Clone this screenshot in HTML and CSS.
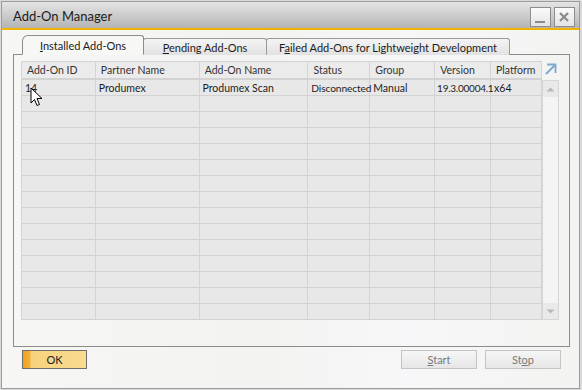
FILE: index.html
```html
<!DOCTYPE html>
<html>
<head>
<meta charset="utf-8">
<link rel="stylesheet" href="styles.css">
</head>
<body>
<div class="window">
  <div class="titlebar">
    <span class="title">Add-On Manager</span>
    <div class="tbtns">
      <span class="tbtn"><svg width="19" height="19" viewBox="0 0 19 19"><rect x="4" y="13" width="10" height="2" fill="#8a8a8a"/></svg></span>
      <span class="tbtn"><svg width="19" height="19" viewBox="0 0 19 19"><path d="M5 5 L13 13 M13 5 L5 13" stroke="#8a8a8a" stroke-width="2.2"/></svg></span>
    </div>
  </div>
  <div class="body">
    <div class="tabs">
      <div class="tab active"><span><u>I</u>nstalled Add-Ons</span></div>
      <div class="tab t2"><span><u>P</u>ending Add-Ons</span></div>
      <div class="tab t3"><span>F<u>a</u>iled Add-Ons for Lightweight Development</span></div>
    </div>
    <div class="panel">
      <div class="grid">
        <div class="gtable">
          <div class="row head">
            <div class="c c1">Add-On ID</div><div class="c c2">Partner Name</div><div class="c c3">Add-On Name</div><div class="c c4">Status</div><div class="c c5">Group</div><div class="c c6">Version</div><div class="c c7">Platform</div>
          </div>
          <div class="row">
            <div class="c c1">14</div><div class="c c2">Produmex</div><div class="c c3">Produmex Scan</div><div class="c c4 narrow">Disconnected</div><div class="c c5">Manual</div><div class="c c6 tight">19.3.00004.1</div><div class="c c7">x64</div>
          </div>
          <div class="row"><div class="c c1"></div><div class="c c2"></div><div class="c c3"></div><div class="c c4"></div><div class="c c5"></div><div class="c c6"></div><div class="c c7"></div></div>
          <div class="row"><div class="c c1"></div><div class="c c2"></div><div class="c c3"></div><div class="c c4"></div><div class="c c5"></div><div class="c c6"></div><div class="c c7"></div></div>
          <div class="row"><div class="c c1"></div><div class="c c2"></div><div class="c c3"></div><div class="c c4"></div><div class="c c5"></div><div class="c c6"></div><div class="c c7"></div></div>
          <div class="row"><div class="c c1"></div><div class="c c2"></div><div class="c c3"></div><div class="c c4"></div><div class="c c5"></div><div class="c c6"></div><div class="c c7"></div></div>
          <div class="row"><div class="c c1"></div><div class="c c2"></div><div class="c c3"></div><div class="c c4"></div><div class="c c5"></div><div class="c c6"></div><div class="c c7"></div></div>
          <div class="row"><div class="c c1"></div><div class="c c2"></div><div class="c c3"></div><div class="c c4"></div><div class="c c5"></div><div class="c c6"></div><div class="c c7"></div></div>
          <div class="row"><div class="c c1"></div><div class="c c2"></div><div class="c c3"></div><div class="c c4"></div><div class="c c5"></div><div class="c c6"></div><div class="c c7"></div></div>
          <div class="row"><div class="c c1"></div><div class="c c2"></div><div class="c c3"></div><div class="c c4"></div><div class="c c5"></div><div class="c c6"></div><div class="c c7"></div></div>
          <div class="row"><div class="c c1"></div><div class="c c2"></div><div class="c c3"></div><div class="c c4"></div><div class="c c5"></div><div class="c c6"></div><div class="c c7"></div></div>
          <div class="row"><div class="c c1"></div><div class="c c2"></div><div class="c c3"></div><div class="c c4"></div><div class="c c5"></div><div class="c c6"></div><div class="c c7"></div></div>
          <div class="row"><div class="c c1"></div><div class="c c2"></div><div class="c c3"></div><div class="c c4"></div><div class="c c5"></div><div class="c c6"></div><div class="c c7"></div></div>
          <div class="row"><div class="c c1"></div><div class="c c2"></div><div class="c c3"></div><div class="c c4"></div><div class="c c5"></div><div class="c c6"></div><div class="c c7"></div></div>
          <div class="row"><div class="c c1"></div><div class="c c2"></div><div class="c c3"></div><div class="c c4"></div><div class="c c5"></div><div class="c c6"></div><div class="c c7"></div></div>
          <div class="row"><div class="c c1"></div><div class="c c2"></div><div class="c c3"></div><div class="c c4"></div><div class="c c5"></div><div class="c c6"></div><div class="c c7"></div></div>
        </div>
        <div class="side">
          <div class="expand"><svg width="15" height="15" viewBox="0 0 15 15"><path d="M4 2.5 H12.5 V11" fill="none" stroke="#7ea8d2" stroke-width="1.8"/><path d="M12 3 L3 12" stroke="#7ea8d2" stroke-width="2"/></svg></div>
          <div class="scroll">
            <div class="sbtn"><svg width="15" height="15" viewBox="0 0 15 15"><path d="M3.5 9.5 L7.5 5.5 L11.5 9.5 Z" fill="#b8b8b8"/></svg></div>
            <div class="strack"></div>
            <div class="sbtn"><svg width="15" height="15" viewBox="0 0 15 15"><path d="M3.5 5.5 L7.5 9.5 L11.5 5.5 Z" fill="#b8b8b8"/></svg></div>
          </div>
        </div>
        <svg class="cursor" width="13" height="20" viewBox="0 0 13 20"><path d="M1 1 L1 16 L4.5 12.5 L7 18.5 L9.5 17.5 L7 11.5 L12 11.5 Z" fill="#fff" stroke="#000" stroke-width="1" stroke-linejoin="round"/></svg>
      </div>
    </div>
    <div class="buttons">
      <div class="btn ok">OK</div>
      <div class="spacer"></div>
      <div class="btn gray"><span><u>S</u>tart</span></div>
      <div class="btn gray"><span>St<u>o</u>p</span></div>
    </div>
  </div>
</div>
</body>
</html>
```
FILE: styles.css
```css
html, body {
  margin: 0;
  padding: 0;
}
body {
  width: 582px;
  height: 390px;
  background: #d9d9d9;
  font-family: Lato, "Noto Sans", sans-serif;
  color: #1c1c1c;
  overflow: hidden;
}
.window {
  box-sizing: border-box;
  margin: 1px 0 0 1px;
  width: 579px;
  height: 388px;
  border: 1px solid #9c9c9c;
  background: linear-gradient(90deg, #f6f6f4 0%, #f3f3f1 45%, #f7f7f9 70%, #f3f3f1 100%);
  display: flex;
  flex-direction: column;
}
.titlebar {
  height: 26px;
  border-bottom: 2px solid #f2b200;
  background: linear-gradient(180deg, #e4e4e4 0%, #cfcfcf 45%, #b4b4b4 100%);
  display: flex;
  align-items: center;
  justify-content: space-between;
  padding-left: 11px;
  padding-right: 4px;
}
.title {
  font-size: 13px;
  color: #202020;
  padding-top: 1px;
}
.tbtns {
  display: flex;
  gap: 3px;
  align-self: flex-start;
  margin-top: 5px;
}
.tbtn {
  box-sizing: border-box;
  width: 21px;
  height: 20px;
  border: 1px solid #8d8d8d;
  background: linear-gradient(180deg, #fbfbfb, #e3e3e3);
  display: flex;
  align-items: center;
  justify-content: center;
}
.body {
  flex: 1;
  display: flex;
  flex-direction: column;
  padding: 6px 9px 0 11px;
}
.tabs {
  display: flex;
  align-items: flex-end;
  height: 19px;
  padding-left: 9px;
  position: relative;
  z-index: 1;
  margin-bottom: -1px;
}
.tab {
  box-sizing: border-box;
  height: 17px;
  border: 1px solid #9a9a9a;
  border-bottom: none;
  background: linear-gradient(180deg, #f4f4f4 0%, #e2e2e2 100%);
  font-size: 11px;
  display: flex;
  align-items: center;
  justify-content: center;
  border-radius: 3px 3px 0 0;
  margin-left: -1px;
}
.tab.active {
  width: 122px;
  background: #f7f7f6;
  border-color: #8c8c8c;
  border-radius: 6px 3px 0 0;
  margin-left: 0;
  padding-top: 1px;
  z-index: 2;
  position: relative;
  height: 20px;
  border-bottom: 1px solid #f7f7f6;
}
.tab.t2 { width: 124px; }
.tab.t3 { width: 244px; }
.panel {
  box-sizing: border-box;
  height: 293px;
  border: 1px solid #8c8c8c;
  padding: 6px 0 0 7px;
}
.grid {
  display: flex;
  position: relative;
  width: 538px;
}
.gtable {
  width: 521px;
  display: flex;
  flex-direction: column;
  background: #e8e8e8;
  border-left: 1px solid #d4d4d4;
  box-sizing: border-box;
}
.row {
  display: flex;
  height: 16px;
  border-bottom: 1px solid #d2d2d2;
  box-sizing: border-box;
}
.row.head {
  height: 19px;
  border-top: 1px solid #d2d2d2;
  background: #ebebeb;
  border-bottom: 2px solid #d2d2d2;
}
.c {
  box-sizing: border-box;
  border-right: 1px solid #d4d4d4;
  font-size: 10.5px;
  padding-left: 3px;
  display: flex;
  align-items: center;
  white-space: nowrap;
}
.c.narrow {
  font-size: 10.2px;
  letter-spacing: -0.1px;
}
.c.tight {
  font-size: 10px;
  letter-spacing: -0.25px;
  padding-left: 2px;
}
.head .c { padding-left: 5px; color: #333; }
.c1 { width: 74px; }
.c2 { width: 104px; }
.c3 { width: 109px; }
.c4 { width: 62px; }
.c5 { width: 65px; }
.c6 { width: 56px; }
.c7 { width: 51px; }
.side {
  width: 17px;
  display: flex;
  flex-direction: column;
}
.expand {
  height: 19px;
  display: flex;
  align-items: flex-start;
  justify-content: center;
  padding-top: 1px;
  box-sizing: border-box;
}
.scroll {
  box-sizing: border-box;
  height: 240px;
  border: 1px solid #d6d6d6;
  background: #f4f4f4;
  display: flex;
  flex-direction: column;
}
.sbtn {
  height: 16px;
  background: #e9e9e9;
  display: flex;
  align-items: center;
  justify-content: center;
}
.strack { flex: 1; }
.cursor {
  position: absolute;
  left: 9px;
  top: 26px;
}
.buttons {
  display: flex;
  padding: 3px 9px 0 9px;
  gap: 8px;
}
.spacer { flex: 1; }
.btn {
  box-sizing: border-box;
  height: 19px;
  font-size: 11px;
  display: flex;
  align-items: center;
  justify-content: center;
}
.btn.ok {
  width: 65px;
  border: 1px solid #6e6e6e;
  background: linear-gradient(90deg, #f0a21c 0px, #f3b13a 7px, #f6d27e 8px, #f8dc8f 100%);
  color: #222;
}
.btn.gray {
  width: 76px;
  border: 1px solid #c4c4c4;
  background: linear-gradient(180deg, #f6f6f6 0%, #e6e6e6 100%);
  color: #7a7a7a;
}
```
